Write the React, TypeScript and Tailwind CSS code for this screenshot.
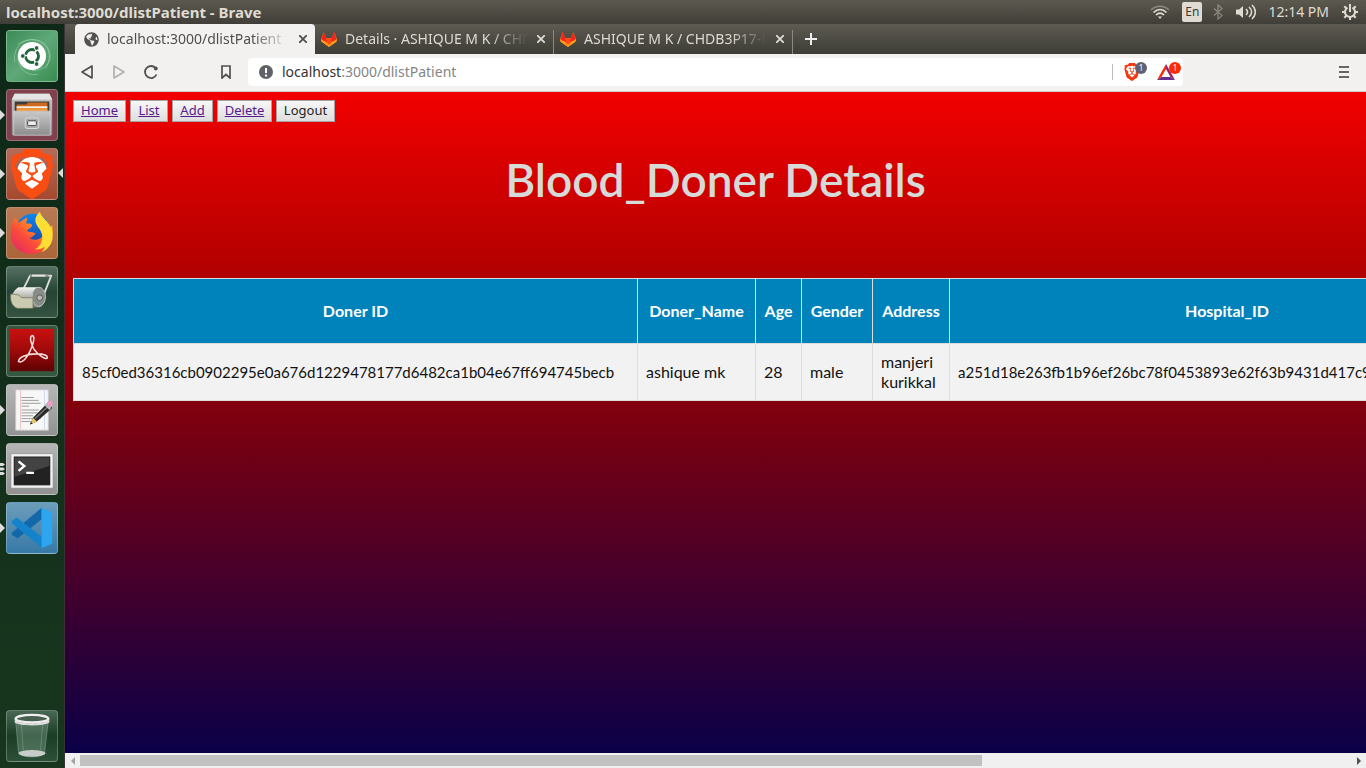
import type { ReactNode } from 'react';
import { SiBrave } from 'react-icons/si';
import { FaGlobeAmericas } from 'react-icons/fa';

function BraveIcon({ className }: { className: string }) {
  return (
    <span className={`relative grid shrink-0 place-items-center ${className}`}>
      <span className="absolute h-2/3 w-3/5 rounded-full bg-white" />
      <SiBrave className="relative h-full w-full" />
    </span>
  );
}

function GitlabIcon() {
  return (
    <svg viewBox="0 0 16 15" className="h-[15px] w-4 shrink-0" aria-hidden="true">
      <path d="M0 7.500 2.700 0 5.200 6h5.600l2.500-6L16 7.500l-.7 2.300L8 15 .7 9.800z" fill="#fc7d1f" />
      <path d="M2.700 0 5.200 6 8 15 .7 7zM13.300 0l-2.500 6L8 15l7.300-8z" fill="#f5221b" />
      <path d="M5.200 6h5.600L8 15z" fill="#ff4b16" />
      <path d="M0 7.500 8 15 .7 9.800zm16 0L8 15l7.300-5.200z" fill="#ffad22" />
      <path d="M.7 8 8 15l7.300-7-4.300 1.500L8 13l-3-3.500z" fill="#ff9c18" />
    </svg>
  );
}

function FilesIcon() {
  return (
    <svg viewBox="0 0 52 52" className="size-full">
      <defs>
        <linearGradient id="cab" x2="0" y2="1">
          <stop stopColor="#c9c9c9" />
          <stop offset="1" stopColor="#8d8d8d" />
        </linearGradient>
      </defs>
      <path d="M8 4h36l3 6v37H5V10z" fill="url(#cab)" />
      <path d="M8 4h36l3 6H5z" fill="#e4e4e4" />
      <path d="M8 12h36v12H8z" fill="#413c38" />
      <path d="M10 15h10l2-2h20v9H10z" fill="#ce6a20" />
      <path d="M10 17h32v2H10z" fill="#f6efe4" />
      <path d="M10 19h32v3H10z" fill="#ee973b" />
      <path d="M7 22h38v25H7z" fill="url(#cab)" stroke="#dadada" strokeWidth=".7" />
      <rect x="19" y="29" width="14" height="11" rx="2" fill="#aaa" stroke="#ddd" />
      <rect x="21.500" y="32" width="9" height="5" rx="1" fill="#eee" stroke="#444" />
    </svg>
  );
}

function FirefoxIcon() {
  return (
    <svg viewBox="0 0 52 52" className="size-full">
      <defs>
        <linearGradient id="ffx" x1="0" y1="1" x2="1" y2="0">
          <stop stopColor="#e0226f" />
          <stop offset=".4" stopColor="#fb4b3a" />
          <stop offset=".75" stopColor="#ffa01e" />
          <stop offset="1" stopColor="#ffd93d" />
        </linearGradient>
        <linearGradient id="ffb" x2="0" y2="1">
          <stop stopColor="#0b87f1" />
          <stop offset="1" stopColor="#213a9a" />
        </linearGradient>
      </defs>
      <circle cx="27" cy="24" r="18" fill="url(#ffb)" />
      <path d="M8 10c2 1 3 3 4 5 3-1 5-3 9-5 0 3-1 4-1 6 3 0 6 0 6 2 0 3-5 4-5 6 2 2 6 0 9 3-3 1-3 4-7 4 5 4 14 2 16-5l8-8c3 15-6 28-19 30C14 49 2 39 4 25c0-6 2-10 4-15z" fill="url(#ffx)" />
      <path d="M34 4c-7 7-5 12 0 18 5 7 3 17-5 21 5 0 8-1 10-3 0 2-1 4-3 6 12-5 14-18 9-27-3-6-9-9-11-15z" fill="#ffdd35" />
    </svg>
  );
}

function DriveIcon() {
  return (
    <svg viewBox="0 0 52 52" className="size-full">
      <defs>
        <linearGradient id="drum" x2="0" y2="1">
          <stop stopColor="#f6f6f3" />
          <stop offset=".5" stopColor="#aeb0a9" />
          <stop offset="1" stopColor="#74786e" />
        </linearGradient>
      </defs>
      <path d="M17 23l7-14h22L37 32" fill="none" stroke="#d9dcd8" strokeWidth="2" strokeLinejoin="round" />
      <path d="M24 9h19" stroke="#8b908c" strokeWidth="3" />
      <path d="M26 9h14" stroke="#e5e7e4" strokeWidth="2" />
      <path d="M12 21h20c8 1 10 18 2 21H9C3 39 3 26 12 21z" fill="url(#drum)" />
      <ellipse cx="33" cy="31" rx="7" ry="10" fill="#888c88" stroke="#c4c7c3" />
      <circle cx="34" cy="32" r="3" fill="#b9bcb7" stroke="#555" />
      <path d="M4 28l8 1 3 3h12v11H11c-6-2-8-8-7-15z" fill="#cbcbb2" stroke="#74775f" strokeWidth=".8" />
    </svg>
  );
}

function AcrobatIcon() {
  return (
    <svg viewBox="0 0 52 52" className="size-full">
      <defs>
        <linearGradient id="pdf" x2="0" y2="1">
          <stop stopColor="#c91010" />
          <stop offset=".5" stopColor="#a00a0a" />
          <stop offset="1" stopColor="#5e0202" />
        </linearGradient>
      </defs>
      <rect x="3" y="3" width="46" height="44" fill="url(#pdf)" />
      <path d="M12 37c0-5 9-8 19-8 7 0 11 1 11 4-1 3-10-3-14-9-3-5-5-13-2-14 4 0 1 10-2 16-3 7-8 13-12 11z" fill="none" stroke="#f7dfdf" strokeWidth="1.600" />
    </svg>
  );
}

function EditorIcon() {
  return (
    <svg viewBox="0 0 52 52" className="size-full">
      <path d="M9 5h34v42H9z" fill="#f7f7f7" stroke="#c6c6c6" />
      <path d="M14 5v41" stroke="#efb4b4" strokeWidth=".8" />
      <path d="M39 5v41" stroke="#bcd1f0" strokeWidth=".8" />
      <path d="M15 13h13M15 16h18M15 19h20M15 22h8M15 26h18M15 29h17M15 32h12M15 35h20M15 38h16" stroke="#9a9a9a" strokeWidth="1" />
      <path d="m24 41 3-7 15-15 5 5-16 14z" fill="#292929" />
      <path d="m29 35 15-14" stroke="#777" strokeWidth="1.500" />
      <path d="m24 41 3-7 4 4z" fill="#e8c86b" />
      <path d="m24 41 1-2.500 1.500 1.500z" fill="#111" />
      <path d="m39 21 2-2 5 5-2 2z" fill="#bbb" />
      <path d="m41 19 2-2c3-2 6 1 4 4l-2 3z" fill="#ec9cc3" />
    </svg>
  );
}

function TerminalIcon() {
  return (
    <svg viewBox="0 0 52 52" className="size-full">
      <rect x="4" y="10" width="44" height="36" rx="1" fill="#f1f1f1" stroke="#777" strokeWidth=".6" />
      <rect x="7" y="13" width="38" height="30" fill="#222" />
      <path d="M8 14h36v9L8 34z" fill="#434343" />
      <path d="m12 18 6 5-6 5M20 30h8" fill="none" stroke="#fff" strokeWidth="2.500" />
    </svg>
  );
}

function CodeIcon() {
  return (
    <svg viewBox="0 0 52 52" className="size-full">
      <path d="m5 31 31-26v12L11 37l-6-4z" fill="#1268ab" />
      <path d="m5 19 5-4 27 21v11L5 21z" fill="#1583cc" />
      <path d="m36 5 11 5v32l-11 5z" fill="#2da5ef" />
    </svg>
  );
}

function TrashIcon() {
  return (
    <svg viewBox="0 0 52 52" className="size-full">
      <path d="M9 10h34l-4 34c-4 5-23 5-27 0z" fill="#a7c7b4" fillOpacity=".3" stroke="#80a18c" strokeWidth=".6" />
      <path d="M15 14l2 27M37 14l-2 27" stroke="#b5cebf" strokeOpacity=".3" />
      <ellipse cx="26" cy="44" rx="14" ry="3.500" fill="#c9cdca" />
      <ellipse cx="26" cy="8" rx="17" ry="4" fill="#476050" stroke="#eee" strokeWidth="2.500" />
      <path d="M8 9c5 5 31 5 36 0v3c-5 4-31 4-36 0z" fill="#ddd" />
    </svg>
  );
}

function Tile({ label, tone, marks = 0, active = false, children }: { label: string; tone: string; marks?: number; active?: boolean; children: ReactNode }) {
  return (
    <div className="relative flex shrink-0 justify-center">
      <button aria-label={label} className={`grid size-[52px] place-items-center overflow-hidden rounded border border-white/25 ${tone}`}>
        {children}
      </button>
      {marks > 0 && (
        <svg viewBox="0 0 5 12" className="absolute left-0 top-5 h-3 w-[5px]" fill="#dcdcdc">
          {marks === 1 ? <path d="M0 1l5 5-5 5z" /> : <path d="M0 0h3l2 1.500L3 3H0zM0 4.500h3L5 6 3 7.500H0zM0 9h3l2 1.500L3 12H0z" />}
        </svg>
      )}
      {active && (
        <svg viewBox="0 0 5 10" className="absolute right-0 top-5 h-[10px] w-[5px]" fill="#dcdcdc">
          <path d="M5 0v10L0 5z" />
        </svg>
      )}
    </div>
  );
}

function Launcher() {
  return (
    <nav aria-label="Launcher" className="flex w-[65px] shrink-0 flex-col gap-[7px] border-r border-[#3a3335] bg-linear-to-b from-[#0e2817] to-[#18361e] pt-[6px] pr-px pb-[6px]">
      <Tile label="Search" tone="bg-linear-to-br from-[#3a8c57] via-[#5fa878] to-[#388d50]">
        <svg viewBox="0 0 52 52" className="col-start-1 row-start-1 size-full" fill="none" stroke="#a4d3b2" strokeOpacity=".6">
          <path d="M8 32C6 14 20 6 33 10c13 6 13 20 7 29M11 14c14-10 33-4 34 12 0 10-10 16-19 15M14 18c-8 12 2 30 18 27" />
        </svg>
        <span className="col-start-1 row-start-1 grid size-7 place-items-center rounded-full bg-white text-[#23643b]">
          <svg viewBox="0 0 24 24" className="size-6" fill="none" stroke="currentColor">
            <circle cx="12" cy="12" r="6.500" strokeWidth="2.800" strokeDasharray="12 1.600" strokeDashoffset="6" />
            <g fill="currentColor" stroke="#fff" strokeWidth=".8">
              <circle cx="2.800" cy="12" r="2.300" />
              <circle cx="16.600" cy="4" r="2.300" />
              <circle cx="16.600" cy="20" r="2.300" />
            </g>
          </svg>
        </span>
      </Tile>
      <Tile label="Files" tone="bg-[#81404e]" marks={1}><FilesIcon /></Tile>
      <Tile label="Brave" tone="bg-linear-to-b from-[#b36b59] to-[#a5492f]" marks={1} active>
        <BraveIcon className="size-[50px] text-[#fa4d12]" />
      </Tile>
      <Tile label="Firefox" tone="bg-linear-to-b from-[#b97a54] to-[#aa6538]" marks={1}><FirefoxIcon /></Tile>
      <Tile label="Disk tool" tone="bg-linear-to-b from-[#547064] via-[#254434] to-[#345340]"><DriveIcon /></Tile>
      <Tile label="Reader" tone="bg-[#365841]"><AcrobatIcon /></Tile>
      <Tile label="Text editor" tone="bg-linear-to-b from-[#b7b7b7] to-[#929292]" marks={1}><EditorIcon /></Tile>
      <Tile label="Terminal" tone="bg-linear-to-b from-[#b5b5b5] to-[#919191]" marks={3}><TerminalIcon /></Tile>
      <Tile label="Code" tone="bg-linear-to-b from-[#6c9dbb] to-[#3679a6]" marks={1}><CodeIcon /></Tile>
      <div className="mt-auto">
        <Tile label="Trash" tone="bg-linear-to-b from-[#486754] via-[#193d25] to-[#2d5138]"><TrashIcon /></Tile>
      </div>
    </nav>
  );
}

function SystemBar() {
  return (
    <header className="flex h-6 shrink-0 items-center bg-linear-to-b from-[#5c594f] to-[#403e38] pr-2 pl-[6px] leading-5 text-[#dfdbd2]">
      <span className="text-[15px] font-bold">localhost:3000/dlistPatient - Brave</span>
      <div className="ml-auto flex items-center">
        <svg viewBox="0 0 20 14" className="h-[14px] w-5" fill="none" stroke="currentColor" strokeWidth="1.700">
          <path d="M1 5c5-5 13-5 18 0" opacity=".4" />
          <path d="M3.500 7.500c4-4 9-4 13 0M6 10c2.500-2.500 5.500-2.500 8 0" />
          <path d="M8 11.500h4L10 14z" fill="currentColor" stroke="none" />
        </svg>
        <span className="ml-3 grid h-5 w-5 place-items-center rounded-xs bg-[#dfdbd2] text-[12px] text-[#3c3b37]">En</span>
        <svg viewBox="0 0 10 16" className="ml-[11px] h-4 w-[10px] opacity-40" fill="none" stroke="currentColor" strokeWidth="1.300">
          <path d="m1 4.500 8 7L5 15V1l4 3.500-8 7" />
        </svg>
        <svg viewBox="0 0 20 16" className="ml-[13px] h-4 w-5" fill="none" stroke="currentColor" strokeWidth="1.600">
          <path d="M0 5.500h3L7 2v12l-4-3.500H0z" fill="currentColor" stroke="none" />
          <path d="M10 5c2 2 2 4 0 6M13 3c3.500 3 3.500 7 0 10M16 1c4.500 4 4.500 10 0 14" />
        </svg>
        <time className="ml-3 text-[14px]">12:14 PM</time>
        <svg viewBox="0 0 16 16" className="ml-[13px] size-4" fill="none" stroke="currentColor">
          <path d="M5.500 3.600a5 5 0 1 0 5 0" strokeWidth="2" />
          <path d="M8 0v8" strokeWidth="2" />
          <path d="M0 8h3m10 0h3M8 13v3M2.300 2.300l2 2m9.400-2-2 2M2.300 13.700l2-2m9.400 2-2-2" strokeWidth="2" />
        </svg>
      </div>
    </header>
  );
}

function Close() {
  return (
    <button aria-label="Close tab" className="grid size-3 shrink-0 place-items-center">
      <svg viewBox="0 0 8 8" className="size-2" stroke="currentColor" strokeWidth="1.800">
        <path d="m0 0 8 8M8 0 0 8" />
      </svg>
    </button>
  );
}

function Tab({ title, icon, active = false }: { title: string; icon: ReactNode; active?: boolean }) {
  return (
    <div className={active ? 'flex w-60 items-center gap-2 rounded-t bg-[#f2f1f0] pr-[6px] pl-[9px] text-[#4f4f4f]' : 'flex w-[238px] items-center gap-2 px-[6px] text-[#dedad1]'}>
      {icon}
      <span className="min-w-0 flex-1 overflow-hidden text-[14px] leading-5 whitespace-nowrap [mask-image:linear-gradient(to_right,black_80%,transparent)]">{title}</span>
      <Close />
    </div>
  );
}

function BrowserChrome() {
  return (
    <>
      <div className="flex h-[30px] shrink-0 bg-linear-to-b from-[#5d5b52] to-[#3d3c36] pl-[10px]">
        <Tab active title="localhost:3000/dlistPatient" icon={<FaGlobeAmericas className="size-[15px] shrink-0 text-[#505050]" />} />
        <Tab title="Details · ASHIQUE M K / CHDB3P17" icon={<GitlabIcon />} />
        <span className="mt-[6px] w-px bg-[#8c897f]" />
        <Tab title="ASHIQUE M K / CHDB3P17-Blood" icon={<GitlabIcon />} />
        <span className="mt-[6px] w-px bg-[#8c897f]" />
        <button aria-label="New tab" className="ml-3 text-[#eee]">
          <svg viewBox="0 0 12 12" className="size-3" stroke="currentColor" strokeWidth="2">
            <path d="M6 0v12M0 6h12" />
          </svg>
        </button>
      </div>
      <div className="flex h-[38px] shrink-0 items-center border-b border-[#d0cfce] bg-[#f2f1f0] px-4 pb-px text-[#505050]">
        <button aria-label="Back">
          <svg viewBox="0 0 12 14" className="h-[14px] w-3" fill="none" stroke="currentColor" strokeWidth="1.700" strokeLinejoin="round"><path d="M11 1v12L1 7z" /></svg>
        </button>
        <button aria-label="Forward" className="ml-5">
          <svg viewBox="0 0 12 14" className="h-[14px] w-3" fill="none" stroke="#b0b0b0" strokeWidth="1.700" strokeLinejoin="round"><path d="M1 1v12l10-6z" /></svg>
        </button>
        <button aria-label="Reload" className="ml-[19px]">
          <svg viewBox="0 0 14 14" className="size-[14px]" fill="none" stroke="currentColor" strokeWidth="1.800"><path d="M12.500 9.500A6 6 0 1 1 11.500 3" /><circle cx="11.800" cy="3.500" r="1.900" fill="currentColor" stroke="none" /></svg>
        </button>
        <button aria-label="Bookmark" className="ml-[63px]">
          <svg viewBox="0 0 10 14" className="h-[14px] w-[10px]" fill="none" stroke="currentColor" strokeWidth="1.700"><path d="M1 1h8v12L5 9.500 1 13z" /></svg>
        </button>
        <div className="ml-[17px] flex h-7 max-w-[935px] flex-1 items-center rounded-sm bg-white pr-[2px] pl-[11px]">
          <svg viewBox="0 0 14 14" className="size-[14px]"><circle cx="7" cy="7" r="7" fill="#5f6368" /><path d="M7 3v5M7 9.500v2" stroke="#fff" strokeWidth="2" /></svg>
          <a href="#address" className="ml-[9px] text-[14px] leading-5 text-[#858585]"><span className="text-[#333]">localhost</span>:3000/dlistPatient</a>
          <div className="ml-auto flex items-center border-l border-[#b9bcc0] pl-[10px]">
            <button aria-label="Shields" className="relative flex h-4 w-[34px] items-center">
              <BraveIcon className="size-[18px] text-[#f13a13]" />
              <span className="absolute top-[-2px] left-3 grid h-3 w-3 place-items-center rounded-full bg-[#606272] text-[8px] leading-3 text-white">1</span>
            </button>
            <button aria-label="Rewards" className="relative h-4 w-6">
              <svg viewBox="0 0 18 16" className="h-4 w-[18px]">
                <path d="M9 0 0 16l4.500-3L9 5z" fill="#ff2b00" /><path d="m9 0 9 16-4.500-3L9 5z" fill="#9e1f63" /><path d="M0 16h18l-4.500-3h-9z" fill="#662d91" />
              </svg>
              <span className="absolute top-[-2px] left-3 grid h-3 w-3 place-items-center rounded-full bg-[#ff2900] text-[8px] leading-3 text-white">1</span>
            </button>
          </div>
        </div>
        <button aria-label="Menu" className="ml-auto">
          <svg viewBox="0 0 12 12" className="size-3" stroke="#666" strokeWidth="2"><path d="M1 1h10M1 6h10M1 11h10" /></svg>
        </button>
      </div>
    </>
  );
}

const navButton = 'flex h-[22px] items-center justify-center border border-[#a3a3a3] bg-linear-to-b from-[#f7f7f7] to-[#dedede] text-[13px]';

const columns = [
  { name: 'Doner ID', value: '85cf0ed36316cb0902295e0a676d1229478177d6482ca1b04e67ff694745becb', width: 'w-[564px]', size: 'text-[15px]' },
  { name: 'Doner_Name', value: 'ashique mk', width: 'w-[118px]', size: 'text-base' },
  { name: 'Age', value: '28', width: 'w-[46px]', size: 'text-base' },
  { name: 'Gender', value: 'male', width: 'w-[71px]', size: 'text-base' },
  { name: 'Address', value: 'manjeri kurikkal', width: 'w-[77px]', size: 'text-base' },
  { name: 'Hospital_ID', value: 'a251d18e263fb1b96ef26bc78f0453893e62f63b9431d417c9', width: 'w-[555px]', size: 'text-[15px]' },
];

function Page() {
  return (
    <main className="min-h-0 flex-1 overflow-hidden bg-[linear-gradient(to_bottom,#f20000_0%,#a40000_33%,#82000d_47%,#0a0048_100%)] p-2">
      <nav aria-label="Page" className="flex gap-[4px]">
        <a href="#home" className={`${navButton} w-[53px] text-[#551a8b] underline`}>Home</a>
        <a href="#list" className={`${navButton} w-[38px] text-[#551a8b] underline`}>List</a>
        <a href="#add" className={`${navButton} w-[41px] text-[#551a8b] underline`}>Add</a>
        <a href="#delete" className={`${navButton} w-[55px] text-[#551a8b] underline`}>Delete</a>
        <button className={`${navButton} w-[59px] text-[#222]`}>Logout</button>
      </nav>
      <h1 className="mt-7 text-center font-[Lato] text-[46px] leading-[60px] font-semibold text-[#d6dbd9]">Blood_Doner Details</h1>
      <table className="mt-[68px] w-[1431px] table-fixed border-collapse font-[Lato]">
        <thead>
          <tr className="h-[65px] bg-[#0082bb] text-white">
            {columns.map((c) => (
              <th key={c.name} scope="col" className={`${c.width} border border-[#ddd] px-0 text-base leading-5 font-bold`}>{c.name}</th>
            ))}
          </tr>
        </thead>
        <tbody>
          <tr className="bg-[#f2f2f2] text-[#111]">
            {columns.map((c) => (
              <td key={c.name} className={`border border-[#ddd] px-2 py-2 ${c.size} leading-5`}>{c.value}</td>
            ))}
          </tr>
        </tbody>
      </table>
    </main>
  );
}

function ScrollBar() {
  return (
    <div className="flex h-[15px] shrink-0 items-center bg-[#f0f0f0]">
      <button aria-label="Scroll left" className="grid w-[15px] place-items-center">
        <svg viewBox="0 0 4 8" className="h-2 w-1" fill="#a3a3a3"><path d="M4 0v8L0 4z" /></svg>
      </button>
      <div className="flex-1"><div className="h-[11px] w-[71%] bg-[#c1c1c1]" /></div>
      <button aria-label="Scroll right" className="grid w-[15px] place-items-center">
        <svg viewBox="0 0 4 8" className="h-2 w-1" fill="#505050"><path d="M0 0v8l4-4z" /></svg>
      </button>
    </div>
  );
}

export default function App() {
  return (
    <div className="flex h-screen flex-col overflow-hidden font-['Noto_Sans',sans-serif]">
      <SystemBar />
      <div className="flex min-h-0 flex-1">
        <Launcher />
        <div className="flex min-w-0 flex-1 flex-col">
          <BrowserChrome />
          <Page />
          <ScrollBar />
        </div>
      </div>
    </div>
  );
}
